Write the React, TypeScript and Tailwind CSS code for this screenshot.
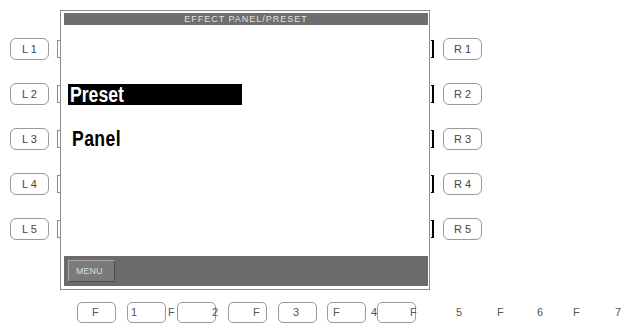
import React from "react";

const SIDE_ROWS = ["1", "2", "3", "4", "5"];

function KeyCap({ label }: { label: string }) {
  return (
    <div className="w-[39px] h-[22px] shrink-0 rounded-[6px] border border-[#9a9a9a] bg-white flex items-center justify-center text-[11px] leading-none text-[#444]">
      {label}
    </div>
  );
}

// function key boxes along the bottom; text offset matches the odd layout of the panel print
function FBox({ text, pad, ml }: { text: string; pad: string; ml: string }) {
  return (
    <div className={`${ml} w-[39px] h-[21px] shrink-0 rounded-[5px] border border-[#9a9a9a] bg-white flex items-center text-[11px] leading-none text-[#555] ${pad}`}>
      {text}
    </div>
  );
}

function Loose({ text, w, pad }: { text: string; w: string; pad: string }) {
  return (
    <div className={`${w} h-[21px] shrink-0 flex items-center text-[11px] leading-none text-[#555] ${pad}`}>
      {text}
    </div>
  );
}

export default function App() {
  return (
    <div
      className="w-[626px] h-[329px] bg-white flex flex-col overflow-hidden"
      style={{ fontFamily: "'Liberation Sans', Arial, sans-serif" }}
    >
      {/* Top: side keys + display */}
      <div className="flex pt-[10px]">
        {/* Left keys */}
        <div className="w-[60px] shrink-0 flex flex-col gap-[23px] pt-[28px]">
          {SIDE_ROWS.map((n) => (
            <div key={n} className="flex items-center h-[22px]">
              <div className="ml-[10px]">
                <KeyCap label={`L ${n}`} />
              </div>
              <div className="ml-[8px] w-[3px] h-[18px] border-l border-y border-[#8c8c8c]" />
            </div>
          ))}
        </div>

        {/* Display */}
        <div className="w-[370px] h-[280px] shrink-0 border border-[#8c8c8c] bg-white flex flex-col pt-[2px] pl-[3px] pr-[1px] pb-[3px]">
          <div className="h-[12px] bg-[#6e6e6e] flex items-center justify-center text-[9px] leading-none tracking-[1px] text-[#e2e2e2]">
            EFFECT PANEL/PRESET
          </div>

          <div className="flex-1 flex flex-col">
            <div className="mt-[59px] ml-[4px] w-[174px] h-[21px] bg-black flex items-center">
              <span className="ml-[2px] origin-left scale-x-[0.8] text-[22px] font-bold leading-none text-white">
                Preset
              </span>
            </div>
            <div className="mt-[23px] ml-[8px] h-[21px] flex items-center">
              <span className="origin-left scale-x-[0.8] text-[22px] font-bold leading-none text-black tracking-[0.5px]">
                Panel
              </span>
            </div>
          </div>

          <div className="h-[30px] bg-[#6b6b6b] flex items-start pt-[4px] pl-[4px]">
            <div className="w-[47px] h-[22px] bg-[#7a7a7a] border border-t-[#a5a5a5] border-l-[#a5a5a5] border-r-[#505050] border-b-[#505050] flex items-center pl-[7px] text-[9px] leading-none text-[#dcdcdc]">
              MENU
            </div>
          </div>
        </div>

        {/* Right keys */}
        <div className="flex-1 flex flex-col gap-[23px] pt-[28px]">
          {SIDE_ROWS.map((n) => (
            <div key={n} className="flex items-center h-[22px]">
              <div className="ml-[1px] w-[3px] h-[18px] border-r-2 border-y border-black" />
              <div className="ml-[9px]">
                <KeyCap label={`R ${n}`} />
              </div>
            </div>
          ))}
        </div>
      </div>

      {/* Function keys */}
      <div className="flex mt-[12px]">
        <FBox text="F" pad="pl-[14px]" ml="ml-[77px]" />
        <FBox text="1" pad="pl-[3px]" ml="ml-[11px]" />
        <Loose text="F" w="w-[11px]" pad="pl-[2px]" />
        <FBox text="2" pad="pl-[34px]" ml="ml-0" />
        <FBox text="F" pad="pl-[24px]" ml="ml-[12px]" />
        <FBox text="3" pad="pl-[14px]" ml="ml-[11px]" />
        <FBox text="F" pad="pl-[5px]" ml="ml-[10px]" />
        <Loose text="4" w="w-[11px]" pad="pl-[5px]" />
        <FBox text="F" pad="pl-[32px]" ml="ml-0" />
        <Loose text="" w="w-[40px]" pad="pl-0" />
        <Loose text="5" w="w-[41px]" pad="pl-0" />
        <Loose text="F" w="w-[40px]" pad="pl-0" />
        <Loose text="6" w="w-[36px]" pad="pl-0" />
        <Loose text="F" w="w-[42px]" pad="pl-0" />
        <Loose text="7" w="w-[11px]" pad="pl-0" />
      </div>
    </div>
  );
}
